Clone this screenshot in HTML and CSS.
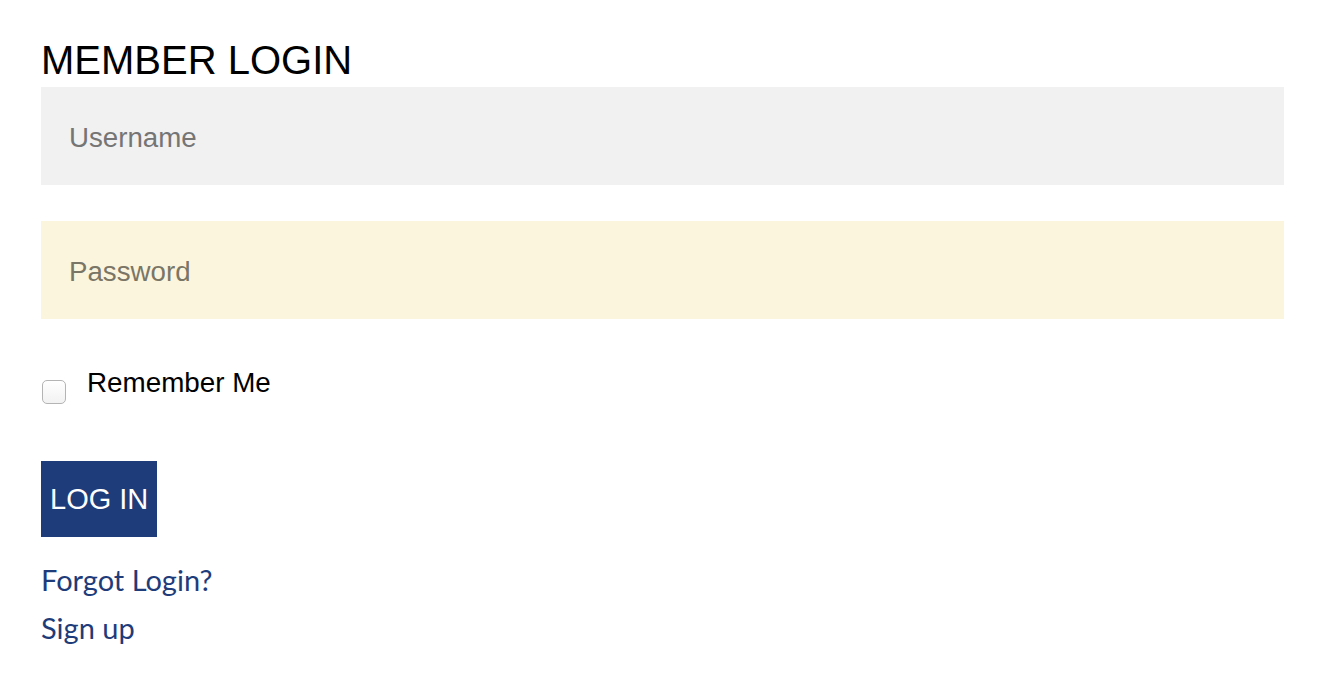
FILE: index.html
```html
<!DOCTYPE html>
<html lang="en">
  <head>
    <meta charset="UTF-8" />
    <meta name="viewport" content="width=device-width, initial-scale=1.0" />
    <title>Member Login</title>
    <link rel="stylesheet" href="styles.css">
  </head>
  <body>
    <div class="login">
      <h1>MEMBER LOGIN</h1>
      <form class="login-form">
        <input type="text" class="field" placeholder="Username">
        <input type="password" class="field field-password" placeholder="Password">
        <label class="remember">
          <input type="checkbox" class="remember-box">
          <span>Remember Me</span>
        </label>
        <button type="button" class="btn-login">LOG IN</button>
      </form>
      <ul class="links">
        <li><a href="#">Forgot Login?</a></li>
        <li><a href="#">Sign up</a></li>
      </ul>
    </div>
  </body>
</html>
```

FILE: styles.css
```css
body {
  margin: 0;
  font-family: "Liberation Sans", Arial, sans-serif;
  background: #fff;
  color: #000;
}
.login {
  padding: 0 40px 0 41px;
}
h1 {
  margin: 40px 0 7px;
  font-size: 40px;
  line-height: 40px;
  font-weight: normal;
}
.login-form {
  display: flex;
  flex-direction: column;
  align-items: flex-start;
}
.field {
  box-sizing: border-box;
  width: 100%;
  height: 98px;
  margin: 0 0 36px;
  padding: 4px 28px 0;
  border: none;
  outline: none;
  background: #f1f1f1;
  font-family: "Liberation Sans", Arial, sans-serif;
  font-size: 27.7px;
  color: #333;
}
.field::placeholder {
  color: #757575;
}
.field-password {
  margin-bottom: 0;
  background: #fcf5dd;
}
.field-password::placeholder {
  color: #7a7666;
}
.remember {
  display: flex;
  align-items: flex-start;
  margin-top: 49px;
  font-size: 27.8px;
  line-height: 30px;
  cursor: pointer;
}
.remember-box {
  appearance: none;
  -webkit-appearance: none;
  box-sizing: border-box;
  width: 24px;
  height: 24px;
  margin: 12px 21px 0 1px;
  border: 1px solid #b4b4b4;
  border-radius: 5px;
  background: linear-gradient(#ffffff, #f2f2f2);
}
.btn-login {
  margin-top: 57px;
  height: 76px;
  padding: 0 9px;
  border: none;
  background: #1f3c7a;
  color: #fff;
  font-family: "Liberation Sans", Arial, sans-serif;
  font-size: 29px;
  line-height: 76px;
  cursor: pointer;
}
.links {
  list-style: none;
  margin: 19px 0 0;
  padding: 0;
  font-family: Lato, "Open Sans", sans-serif;
  font-size: 29px;
  line-height: 48px;
}
.links a {
  color: #1f3c7a;
  text-decoration: none;
}
```
